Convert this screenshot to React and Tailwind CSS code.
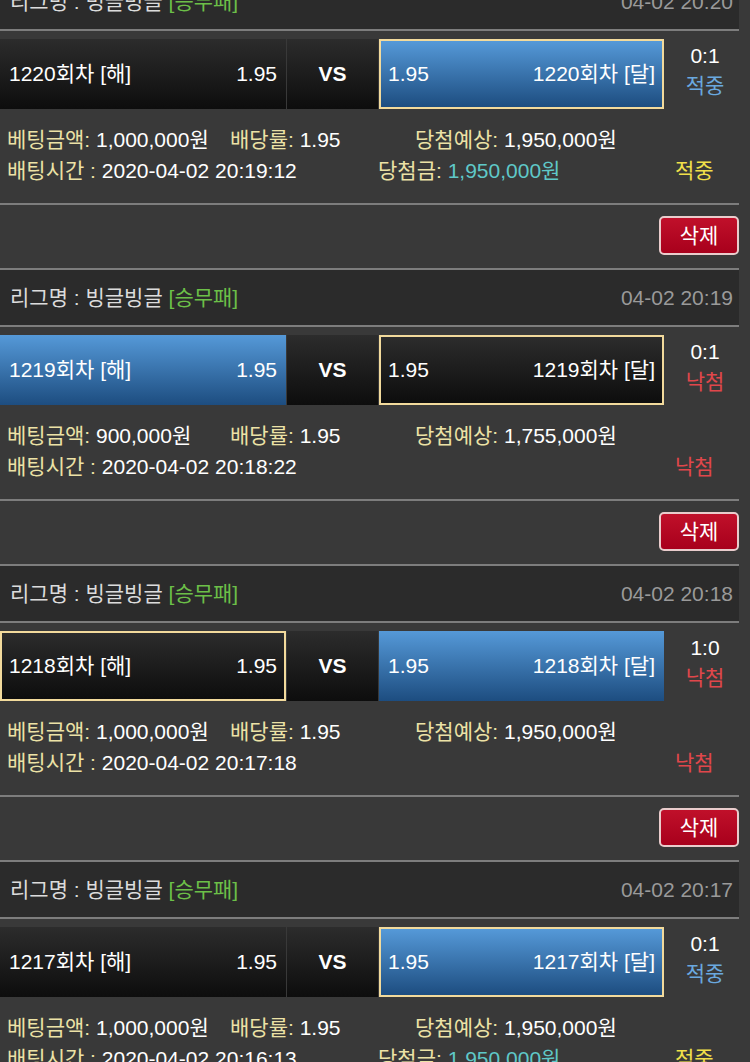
import React from "react";

const blocks = [
  {
    date: "04-02 20:20",
    round: "1220",
    leftWin: false,
    sel: "right",
    score: "0:1",
    result: "hit",
    amount: "1,000,000원",
    expect: "1,950,000원",
    time: "2020-04-02 20:19:12",
    prize: "1,950,000원",
  },
  {
    date: "04-02 20:19",
    round: "1219",
    leftWin: true,
    sel: "right",
    score: "0:1",
    result: "miss",
    amount: "900,000원",
    expect: "1,755,000원",
    time: "2020-04-02 20:18:22",
    prize: null,
  },
  {
    date: "04-02 20:18",
    round: "1218",
    leftWin: false,
    sel: "left",
    score: "1:0",
    result: "miss",
    amount: "1,000,000원",
    expect: "1,950,000원",
    time: "2020-04-02 20:17:18",
    prize: null,
  },
  {
    date: "04-02 20:17",
    round: "1217",
    leftWin: false,
    sel: "right",
    score: "0:1",
    result: "hit",
    amount: "1,000,000원",
    expect: "1,950,000원",
    time: "2020-04-02 20:16:13",
    prize: "1,950,000원",
  },
];

const dark = "bg-[linear-gradient(to_bottom,#2c2c2c,#0d0d0d)]";
const blue = "bg-[linear-gradient(to_bottom,#5599d8,#1d4d80)]";

function Cell({ isBlue, selected, left, right }) {
  return (
    <div
      className={`flex h-full items-center justify-between ${isBlue ? blue : dark} ${
        selected ? "border-2 border-[#f2da9c] px-[7px]" : "px-[9px]"
      }`}
    >
      <span>{left}</span>
      <span>{right}</span>
    </div>
  );
}

function Block({ b }) {
  const rightBlue = !b.leftWin;
  return (
    <div>
      <div className="h-[2px] w-[739px] bg-[#7d7d7d]" />
      <div className="flex h-[55px] w-[739px] items-center justify-between bg-[#2b2b2b] pl-[10px] pr-[6px]">
        <span className="text-[#dcdcdc]">
          리그명 : 빙글빙글 <span className="text-[#6cbf48]">[승무패]</span>
        </span>
        <span className="text-[#9a9a9a]">{b.date}</span>
      </div>
      <div className="h-[2px] w-[739px] bg-[#7d7d7d]" />
      <div className="mt-[8px] flex h-[70px] gap-[1px]">
        <div className="w-[286px]">
          <Cell
            isBlue={b.leftWin}
            selected={b.sel === "left"}
            left={`${b.round}회차 [해]`}
            right="1.95"
          />
        </div>
        <div className={`flex w-[91px] items-center justify-center ${dark}`}>
          <span className="font-bold">VS</span>
        </div>
        <div className="w-[285px]">
          <Cell
            isBlue={rightBlue}
            selected={b.sel === "right"}
            left="1.95"
            right={`${b.round}회차 [달]`}
          />
        </div>
        <div className="flex w-[80px] flex-col items-center pt-[2px] leading-[30px]">
          <span>{b.score}</span>
          <span className={b.result === "hit" ? "text-[#6aa8df]" : "text-[#e0474b]"}>
            {b.result === "hit" ? "적중" : "낙첨"}
          </span>
        </div>
      </div>
      <div className="h-[94px] pl-[7px] pt-[15px] leading-[31px]">
        <div className="flex">
          <span className="w-[223px] shrink-0">
            <span className="text-[#ece2a6]">베팅금액:</span> {b.amount}
          </span>
          <span className="w-[185px] shrink-0">
            <span className="text-[#ece2a6]">배당률:</span> 1.95
          </span>
          <span>
            <span className="text-[#ece2a6]">당첨예상:</span> {b.expect}
          </span>
        </div>
        <div className="flex">
          <span className="w-[371px] shrink-0">
            <span className="text-[#ece2a6]">배팅시간 :</span> {b.time}
          </span>
          <span className="w-[297px] shrink-0">
            {b.prize && (
              <>
                <span className="text-[#ece2a6]">당첨금:</span>{" "}
                <span className="text-[#5fc8c8]">{b.prize}</span>
              </>
            )}
          </span>
          <span className={b.result === "hit" ? "text-[#f1e04a]" : "text-[#e0474b]"}>
            {b.result === "hit" ? "적중" : "낙첨"}
          </span>
        </div>
      </div>
      <div className="h-[2px] w-[739px] bg-[#7d7d7d]" />
      <div className="flex h-[63px] w-[739px] justify-end pt-[11px]">
        <button className="flex h-[39px] w-[80px] items-center justify-center rounded-[5px] border-2 border-[#e9cccc] bg-[linear-gradient(to_bottom,#c0102a,#a8001c)] text-white">
          삭제
        </button>
      </div>
    </div>
  );
}

export default function App() {
  return (
    <div
      className="h-[1062px] w-[750px] overflow-hidden bg-[#393939] text-[21px] leading-[26px] text-white"
      style={{ fontFamily: '"Liberation Sans", "Noto Sans CJK KR", sans-serif' }}
    >
      <div className="-mt-[28px]">
        {blocks.map((b, i) => (
          <Block key={i} b={b} />
        ))}
      </div>
    </div>
  );
}
